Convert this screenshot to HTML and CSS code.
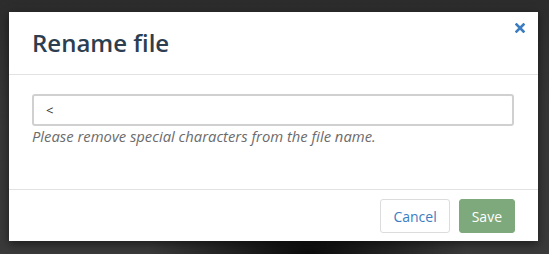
FILE: index.html
```html
<!DOCTYPE html>
<html lang="en">
<head>
  <meta charset="UTF-8" />
  <title>Rename file</title>
  <link rel="stylesheet" href="styles.css">
</head>
<body>
  <div class="modal">
    <div class="modal-header">
      <h4 class="modal-title">Rename file</h4>
      <button class="btn-close" aria-label="Close">
        <svg width="10" height="10" viewBox="0 0 10 10">
          <path d="M1.5 1.5 L8.5 8.5 M8.5 1.5 L1.5 8.5" stroke="#3b7dc0" stroke-width="2.6" stroke-linecap="square" fill="none"/>
        </svg>
      </button>
    </div>
    <div class="modal-body">
      <input type="text" class="name-input" value="&lt;">
      <p class="help">Please remove special characters from the file name.</p>
    </div>
    <div class="modal-footer">
      <button class="btn btn-cancel">Cancel</button>
      <button class="btn btn-save">Save</button>
    </div>
  </div>
</body>
</html>
```

FILE: styles.css
```css
html, body {
  height: 100%;
}
body {
  margin: 0;
  padding: 12px 11px 0 9px;
  box-sizing: border-box;
  font-family: 'Open Sans', sans-serif;
  background-color: #3a3a3a;
  background-image:
    radial-gradient(ellipse 160px 70px at 56% 100%, rgba(0,0,0,0.8), rgba(0,0,0,0)),
    linear-gradient(180deg, #2c2c2c 0%, #363636 40%, #3a3a3a 100%);
}
.modal {
  width: 529px;
  height: 229px;
  background: white;
  box-shadow: 0 3px 9px rgba(0,0,0,0.5);
  display: flex;
  flex-direction: column;
}
.modal-header {
  position: relative;
  padding: 14px 23px 15px;
  border-bottom: 1px solid #e2e2e2;
}
.modal-title {
  margin: 0;
  font-size: 24px;
  font-weight: 600;
  line-height: 33px;
  color: #2c3e50;
}
.btn-close {
  position: absolute;
  top: 11px;
  right: 13px;
  padding: 0;
  border: none;
  background: none;
  width: 10px;
  height: 10px;
  cursor: pointer;
}
.btn-close svg {
  display: block;
}
.modal-body {
  flex: 1;
  padding: 19px 24px 0 23px;
}
.name-input {
  display: block;
  width: 100%;
  box-sizing: border-box;
  height: 32px;
  margin: 0;
  padding: 0 12px;
  border: 2px solid #d0d0d0;
  border-radius: 3px;
  font-family: 'Open Sans', sans-serif;
  font-size: 13px;
  color: #333;
}
.help {
  margin: 1px 0 0;
  font-size: 14.8px;
  line-height: 19px;
  font-style: italic;
  color: #6b6b6b;
}
.modal-footer {
  display: flex;
  justify-content: flex-end;
  gap: 9px;
  padding: 9px 23px 8px;
  border-top: 1px solid #e2e2e2;
}
.btn {
  height: 34px;
  padding: 0 12px;
  border-radius: 3px;
  font-family: 'Open Sans', sans-serif;
  font-size: 14px;
  cursor: pointer;
}
.btn-cancel {
  background: white;
  border: 1px solid #dcdcdc;
  color: #3b7dc0;
}
.btn-save {
  background: #7da97c;
  border: 1px solid #7da97c;
  color: white;
}
```
